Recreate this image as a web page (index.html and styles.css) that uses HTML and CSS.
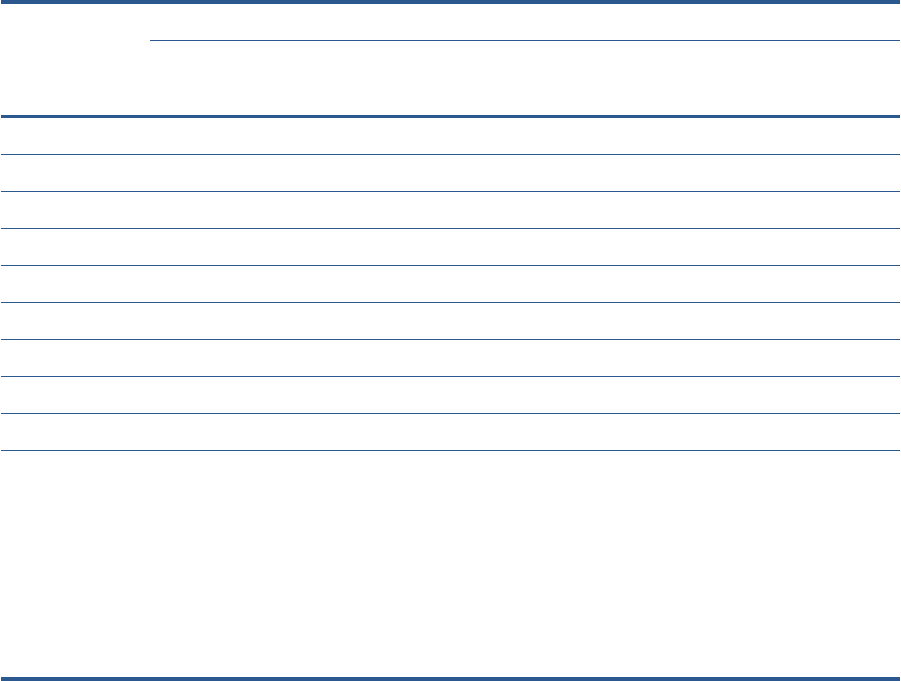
FILE: index.html
```html
<!DOCTYPE html>
<html lang="en">
<head>
    <meta charset="UTF-8">
    <title>Table</title>
    <link rel="stylesheet" href="styles.css">
</head>
<body>
    <table class="data-table">
        <colgroup>
            <col class="col-label">
            <col>
            <col>
            <col>
        </colgroup>
        <thead>
            <tr class="head-top">
                <th rowspan="2"></th>
                <th colspan="3" class="group-head"></th>
            </tr>
            <tr class="head-sub">
                <th></th>
                <th></th>
                <th></th>
            </tr>
        </thead>
        <tbody>
            <tr><td></td><td></td><td></td><td></td></tr>
            <tr><td></td><td></td><td></td><td></td></tr>
            <tr><td></td><td></td><td></td><td></td></tr>
            <tr><td></td><td></td><td></td><td></td></tr>
            <tr><td></td><td></td><td></td><td></td></tr>
            <tr><td></td><td></td><td></td><td></td></tr>
            <tr><td></td><td></td><td></td><td></td></tr>
            <tr><td></td><td></td><td></td><td></td></tr>
            <tr><td></td><td></td><td></td><td></td></tr>
            <tr class="filler"><td></td><td></td><td></td><td></td></tr>
        </tbody>
    </table>
</body>
</html>
```

FILE: styles.css
```css
body {
    margin: 0;
    background-color: #fff;
    font-family: 'Liberation Sans', Arial, sans-serif;
    font-size: 13px;
    color: #222;
}
.data-table {
    margin-left: 1px;
    width: 899px;
    table-layout: fixed;
    border-collapse: separate;
    border-spacing: 0;
    border-top: 4px solid #2c5890;
    border-bottom: 4px solid #2c5890;
}
.col-label {
    width: 149px;
}
.data-table th,
.data-table td {
    box-sizing: border-box;
    padding: 0;
    font-weight: normal;
}
.head-top th {
    height: 37px;
}
.group-head {
    border-bottom: 1px solid #2c5890;
}
.data-table thead tr:last-child th,
.data-table thead th[rowspan] {
    border-bottom: 3px solid #2c5890;
}
.head-sub th {
    height: 77px;
}
.data-table tbody td {
    height: 37px;
    border-bottom: 1px solid #2c5890;
}
.data-table tbody .filler td {
    height: 226px;
    border-bottom: none;
}
```
